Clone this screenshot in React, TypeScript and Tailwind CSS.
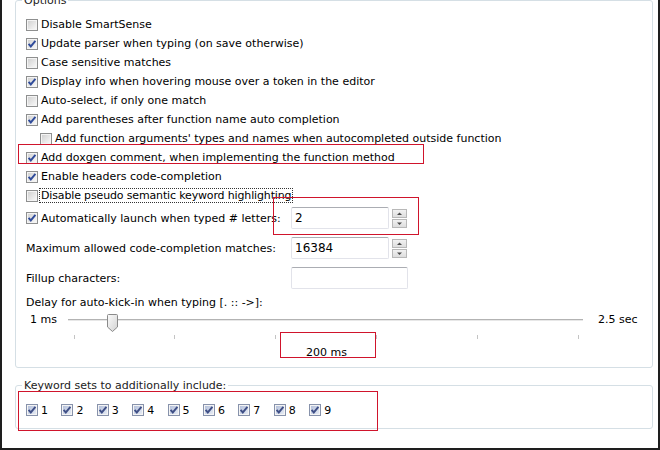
import React from "react";

type CbKind = "off" | "on" | "blue";

function Checkbox({ kind }: { kind: CbKind }) {
  const id = React.useId().replace(/:/g, "");
  const fillA = kind === "blue" ? "#b4c0da" : "#d2d2d2";
  const fillB = kind === "blue" ? "#e6ebf4" : "#f7f7f7";
  const stroke = kind === "blue" ? "#8792ab" : "#8e8f8f";
  return (
    <svg width="12" height="12" viewBox="0 0 12 12" className="shrink-0 block">
      <defs>
        <linearGradient id={`g${id}`} x1="0" y1="0" x2="1" y2="1">
          <stop offset="0" stopColor={fillA} />
          <stop offset="1" stopColor={fillB} />
        </linearGradient>
      </defs>
      <rect x="0.5" y="0.5" width="11" height="11" fill="#f4f4f4" stroke={stroke} />
      <rect x="2" y="2" width="8" height="8" fill={`url(#g${id})`} />
      {kind !== "off" && (
        <path d="M2.6 5.8 L4.8 8.4 L9.4 2.8" fill="none" stroke={kind === "blue" ? "#3f4f86" : "#2f4b9a"} strokeWidth="1.9" />
      )}
    </svg>
  );
}

function Row({ kind, text, indent }: { kind: CbKind; text: string; indent?: boolean }) {
  return (
    <div className={`flex items-center h-[19px] gap-[3px] ${indent ? "pl-[14px]" : ""}`}>
      <Checkbox kind={kind} />
      <span className="whitespace-nowrap">{text}</span>
    </div>
  );
}

function SpinButton({ up }: { up: boolean }) {
  return (
    <svg width="15" height="9" viewBox="0 0 15 9" className="block">
      <defs>
        <linearGradient id={up ? "spu" : "spd"} x1="0" y1="0" x2="0" y2="1">
          <stop offset="0" stopColor="#f3f3f3" />
          <stop offset="1" stopColor="#dcdcdc" />
        </linearGradient>
      </defs>
      <rect x="0.5" y="0.5" width="14" height="8" fill={`url(#${up ? "spu" : "spd"})`} stroke="#b8b8b8" />
      {up ? (
        <path d="M5 6 L7.5 3.5 L10 6 Z" fill="#4a4a4a" />
      ) : (
        <path d="M5 3.5 L7.5 6 L10 3.5 Z" fill="#4a4a4a" />
      )}
    </svg>
  );
}

function TextBox({ value, w }: { value: string; w: string }) {
  return (
    <div
      className={`${w} h-[22px] flex items-center pl-[3px] text-[12px] border border-[#e2e3ea] border-t-[#abadb3] rounded-[2px] bg-white`}
    >
      {value}
    </div>
  );
}

function Slider() {
  const ticks = [8, 108, 209, 310, 411, 512];
  return (
    <svg width="520" height="30" viewBox="0 0 520 30" className="block shrink-0">
      <defs>
        <linearGradient id="thumb" x1="0" y1="0" x2="1" y2="1">
          <stop offset="0" stopColor="#fbfbfb" />
          <stop offset="1" stopColor="#d2d2d2" />
        </linearGradient>
      </defs>
      <line x1="2" y1="9.5" x2="517" y2="9.5" stroke="#b3b3b3" />
      <line x1="2" y1="10.5" x2="517" y2="10.5" stroke="#e7e7e7" />
      {ticks.map((x) => (
        <line key={x} x1={x + 0.5} y1="25" x2={x + 0.5} y2="29" stroke="#c4c4c4" />
      ))}
      <path
        d="M41.5 5.5 Q41.5 4.5 42.5 4.5 H50.5 Q51.5 4.5 51.5 5.5 V17 L46.5 21.5 L41.5 17 Z"
        fill="url(#thumb)"
        stroke="#8a8a8a"
      />
    </svg>
  );
}

export default function App() {
  return (
    <div className="w-[660px] h-[450px] relative overflow-hidden bg-white border-l-2 border-r-2 border-b-2 border-[#1e1e1e] text-[11px] text-black font-['DejaVu_Sans',sans-serif] leading-[13px]">
      <div className="pl-[13px] pr-[5px]">
        {/* Options group */}
        <div className="relative h-[368px] border border-[#d5dfe5] rounded-[3px] pl-[10px] pt-[14px]">
          <div className="absolute left-[6px] top-[-7px] bg-white px-[2px] text-[#222]">Options</div>
          <Row kind="off" text="Disable SmartSense" />
          <Row kind="on" text="Update parser when typing (on save otherwise)" />
          <Row kind="off" text="Case sensitive matches" />
          <Row kind="on" text="Display info when hovering mouse over a token in the editor" />
          <Row kind="off" text="Auto-select, if only one match" />
          <Row kind="on" text="Add parentheses after function name auto completion" />
          <Row kind="off" text="Add function arguments' types and names when autocompleted outside function" indent />
          <Row kind="on" text="Add doxgen comment, when implementing the function method" />
          <Row kind="on" text="Enable headers code-completion" />
          <div className="flex items-center h-[19px] gap-[1px]">
            <Checkbox kind="off" />
            <span className="whitespace-nowrap border border-dotted border-[#333] px-[1px] leading-[13px] tracking-[-0.15px]">
              Disable pseudo semantic keyword highlighting
            </span>
          </div>

          <div className="flex items-center h-[22px] mt-[2px]">
            <div className="w-[265px] shrink-0 flex items-center gap-[3px]">
              <Checkbox kind="on" />
              <span className="whitespace-nowrap">Automatically launch when typed # letters:</span>
            </div>
            <TextBox value="2" w="w-[98px]" />
            <div className="ml-[3px] flex flex-col gap-[1px]">
              <SpinButton up />
              <SpinButton up={false} />
            </div>
          </div>

          <div className="flex items-center h-[22px] mt-[8px]">
            <div className="w-[265px] shrink-0 whitespace-nowrap">Maximum allowed code-completion matches:</div>
            <TextBox value="16384" w="w-[98px]" />
            <div className="ml-[3px] flex flex-col gap-[1px]">
              <SpinButton up />
              <SpinButton up={false} />
            </div>
          </div>

          <div className="flex items-center h-[22px] mt-[8px]">
            <div className="w-[265px] shrink-0 whitespace-nowrap">Fillup characters:</div>
            <TextBox value="" w="w-[117px]" />
          </div>

          <div className="flex items-center h-[16px] mt-[5px] whitespace-nowrap">
            Delay for auto-kick-in when typing [. :: -&gt;]:
          </div>

          <div className="flex items-start h-[30px] pl-[4px]">
            <span className="w-[36px] shrink-0 mt-[3px] whitespace-nowrap">1 ms</span>
            <Slider />
            <span className="ml-[12px] mt-[3px] whitespace-nowrap">2.5 sec</span>
          </div>

          <div className="flex items-center h-[16px] mt-[4px] pl-[280px] whitespace-nowrap">200 ms</div>
        </div>

        {/* Keyword sets group */}
        <div className="relative h-[44px] mt-[17px] border border-[#d5dfe5] rounded-[3px] pl-[10px] pt-[16px]">
          <div className="absolute left-[6px] top-[-7px] bg-white px-[2px] text-[#222] whitespace-nowrap">
            Keyword sets to additionally include:
          </div>
          <div className="flex items-center h-[16px]">
            {["1", "2", "3", "4", "5", "6", "7", "8", "9"].map((n) => (
              <div key={n} className="w-[35.4px] shrink-0 flex items-center gap-[3px]">
                <Checkbox kind="blue" />
                <span>{n}</span>
              </div>
            ))}
          </div>
        </div>
      </div>

      {/* red annotation rectangles */}
      <div className="absolute left-[16px] top-[144px] w-[406px] h-[20px] border border-[#d0142c]" />
      <div className="absolute left-[271px] top-[197px] w-[146px] h-[38px] border border-[#d0142c]" />
      <div className="absolute left-[278px] top-[332px] w-[96px] h-[26px] border border-[#d0142c]" />
      <div className="absolute left-[16px] top-[391px] w-[360px] h-[40px] border border-[#d0142c]" />
    </div>
  );
}
